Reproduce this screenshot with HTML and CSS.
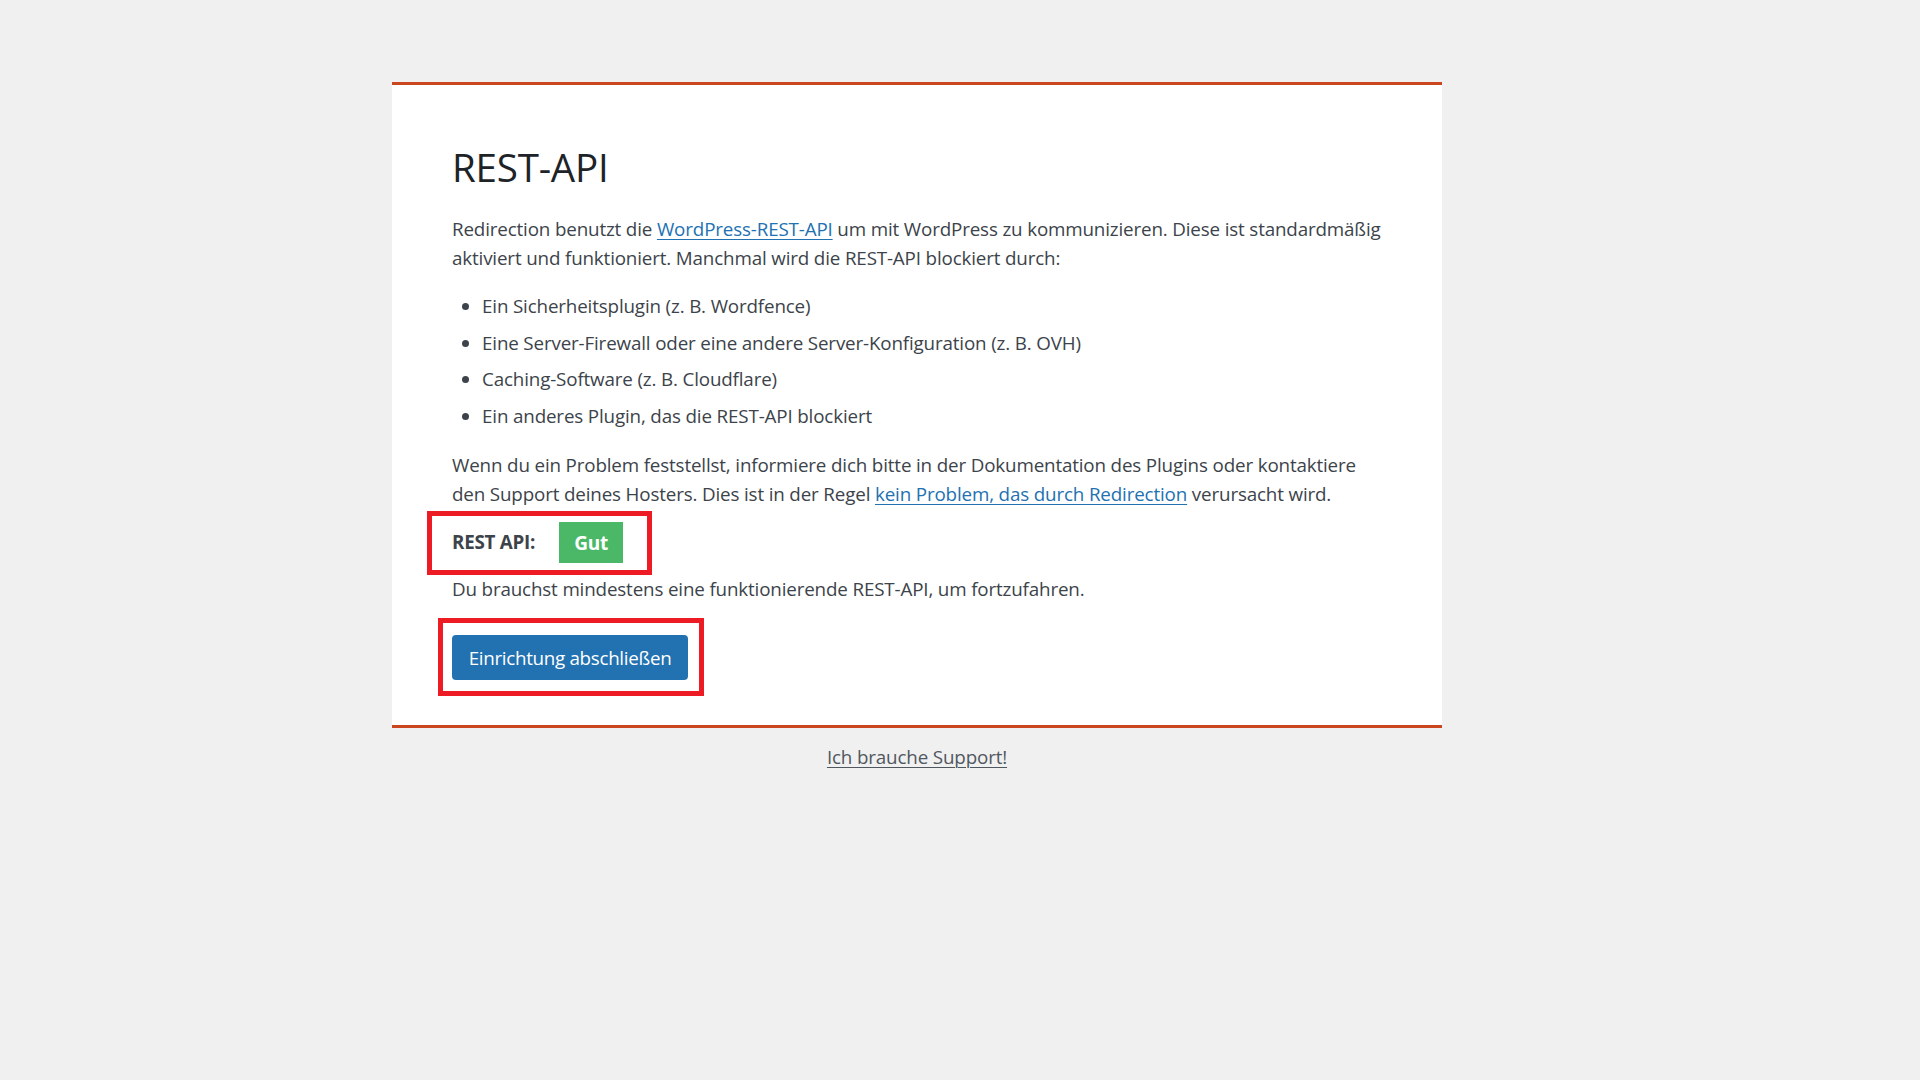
FILE: index.html
```html
<!DOCTYPE html>
<html lang="de">
<head>
<meta charset="utf-8">
<title>Redirection – REST-API</title>
<link rel="stylesheet" href="styles.css">
</head>
<body>
<div class="wizard">
  <div class="card">
    <h1 class="title">REST-API</h1>
    <p class="text">Redirection benutzt die <a class="link" href="#">WordPress-REST-API</a> um mit WordPress zu kommunizieren. Diese ist standardmäßig aktiviert und funktioniert. Manchmal wird die REST-API blockiert durch:</p>
    <ul class="list">
      <li>Ein Sicherheitsplugin (z. B. Wordfence)</li>
      <li>Eine Server-Firewall oder eine andere Server-Konfiguration (z. B. OVH)</li>
      <li>Caching-Software (z. B. Cloudflare)</li>
      <li>Ein anderes Plugin, das die REST-API blockiert</li>
    </ul>
    <p class="text">Wenn du ein Problem feststellst, informiere dich bitte in der Dokumentation des Plugins oder kontaktiere den Support deines Hosters. Dies ist in der Regel <a class="link" href="#">kein Problem, das durch Redirection</a> verursacht wird.</p>
    <div class="status">
      <div class="status-row mark-a">
        <span class="status-label">REST API:</span>
        <span class="status-badge">Gut</span>
      </div>
    </div>
    <p class="text text-tight">Du brauchst mindestens eine funktionierende REST-API, um fortzufahren.</p>
    <div class="actions">
      <span class="mark-b"><button class="btn-primary" type="button">Einrichtung abschließen</button></span>
    </div>
  </div>
  <div class="footer">
    <a class="support" href="#">Ich brauche Support!</a>
  </div>
</div>
</body>
</html>
```
FILE: styles.css
```css
html, body {
  margin: 0;
  padding: 0;
}
body {
  background: #f0f0f1;
  font-family: "Open Sans", "Noto Sans", sans-serif;
  color: #3c434a;
  min-height: 1080px;
}
.wizard {
  width: 1050px;
  margin: 82px 0 0 392px;
}
.card {
  background: #fff;
  border-top: 3px solid #c9461e;
  border-bottom: 3px solid #c9461e;
  padding: 59px 60px 45px 60px;
}
.title {
  margin: 0;
  font-size: 38.5px;
  line-height: 47px;
  font-weight: 400;
  color: #1d2327;
  letter-spacing: -0.2px;
}
.text {
  margin: 24px 0 0;
  font-size: 18.8px;
  line-height: 29px;
  letter-spacing: -0.15px;
}
.link {
  color: #2271b1;
  text-decoration: underline;
  text-underline-offset: 3px;
  text-decoration-thickness: 1px;
}
.list {
  margin: 19px 0 0;
  padding: 0 0 0 30px;
  font-size: 18.8px;
  line-height: 29px;
  letter-spacing: -0.15px;
}
.list li {
  margin-bottom: 7.5px;
}
.list li:last-child {
  margin-bottom: 0;
}
.list + .text {
  margin-top: 20px;
}
.status {
  margin-top: 13.5px;
}
.status-row {
  display: inline-flex;
  align-items: center;
  position: relative;
  height: 41px;
}
.status-label {
  font-weight: 700;
  font-size: 18.8px;
  line-height: 29px;
  letter-spacing: -0.25px;
  color: #3c434a;
  margin-right: 24px;
}
.status-badge {
  display: inline-flex;
  align-items: center;
  justify-content: center;
  width: 64px;
  height: 41px;
  background: #4ab866;
  color: #fff;
  font-weight: 700;
  font-size: 19px;
  letter-spacing: -0.3px;
}
.mark-a::after {
  content: "";
  position: absolute;
  left: -25px;
  right: -29px;
  top: -11px;
  bottom: -12px;
  border: 5px solid #ed1c24;
  pointer-events: none;
}
.text-tight {
  margin-top: 12px;
}
.actions {
  margin-top: 31px;
  display: flex;
}
.mark-b {
  position: relative;
  display: inline-flex;
}
.mark-b::after {
  content: "";
  position: absolute;
  left: -14px;
  right: -16px;
  top: -17px;
  bottom: -16px;
  border: 5px solid #ed1c24;
  pointer-events: none;
}
.btn-primary {
  width: 236px;
  height: 45px;
  border: 0;
  border-radius: 4px;
  background: #2271b1;
  color: #fff;
  font-family: "Open Sans", "Noto Sans", sans-serif;
  font-size: 18.8px;
  letter-spacing: -0.3px;
  padding: 0;
  cursor: pointer;
}
.footer {
  text-align: center;
  margin-top: 15px;
}
.support {
  font-size: 18.8px;
  line-height: 29px;
  letter-spacing: -0.15px;
  color: #50575e;
  text-decoration: underline;
  text-underline-offset: 3px;
  text-decoration-thickness: 1px;
}
```
